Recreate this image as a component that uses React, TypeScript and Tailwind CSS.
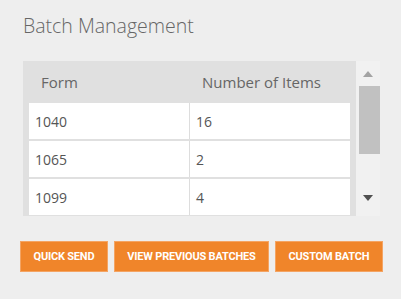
import React from 'react';

const ROWS = [
  { form: '1040', count: 16 },
  { form: '1065', count: 2 },
  { form: '1099', count: 4 },
];

const BUTTONS = ['Quick Send', 'View Previous Batches', 'Custom Batch'];

export default function App() {
  return (
    <div className="w-[401px] h-[299px] bg-[#eeeeee] overflow-hidden" style={{ fontFamily: '"Open Sans", sans-serif' }}>
      <h1 className="pl-[23px] pt-[13px] text-[19.5px] leading-[26px] font-light text-[#666666]">Batch Management</h1>

      <div className="ml-[23px] mt-[22px] w-[357px] h-[155px] flex">
        {/* table */}
        <div className="w-[333px] h-full bg-[#e0e0e0] px-[6px] overflow-hidden">
          <div className="flex h-[42px] items-center text-[15px] text-[#666666]">
            <div className="w-[161px] pl-[12px]">Form</div>
            <div className="pl-[12px]">Number of Items</div>
          </div>
          <div className="flex flex-col gap-[2px]">
            {ROWS.map((r) => (
              <div key={r.form} className="flex h-[36px] text-[14px] text-[#555555]">
                <div className="w-[161px] bg-white border-r border-[#dddddd] pl-[6px] flex items-center">{r.form}</div>
                <div className="flex-1 bg-white pl-[6px] flex items-center">{r.count}</div>
              </div>
            ))}
          </div>
        </div>
        {/* scrollbar */}
        <div className="w-[24px] h-full bg-[#f1f1f1] flex flex-col items-center">
          <div className="h-[25px] w-full flex items-center justify-center">
            <svg width="10" height="6" viewBox="0 0 10 6"><path d="M5 0 L10 6 L0 6 Z" fill="#a3a3a3" /></svg>
          </div>
          <div className="w-[21px] ml-[2px] h-[68px] bg-[#c1c1c1]" />
          <div className="flex-1" />
          <div className="h-[28px] w-full flex items-start justify-center pt-[7px]">
            <svg width="10" height="6" viewBox="0 0 10 6"><path d="M0 0 L10 0 L5 6 Z" fill="#505050" /></svg>
          </div>
        </div>
      </div>

      <div className="flex gap-[6px] pl-[20px] mt-[25px]">
        {BUTTONS.map((b) => (
          <button
            key={b}
            className="shrink-0 whitespace-nowrap h-[31px] px-[12.5px] bg-[#f0852a] border border-[#f4a463] text-white text-[11px] leading-none font-bold uppercase tracking-[-0.2px]"
            style={{ fontFamily: 'Roboto, sans-serif' }}
          >
            {b}
          </button>
        ))}
      </div>
    </div>
  );
}
